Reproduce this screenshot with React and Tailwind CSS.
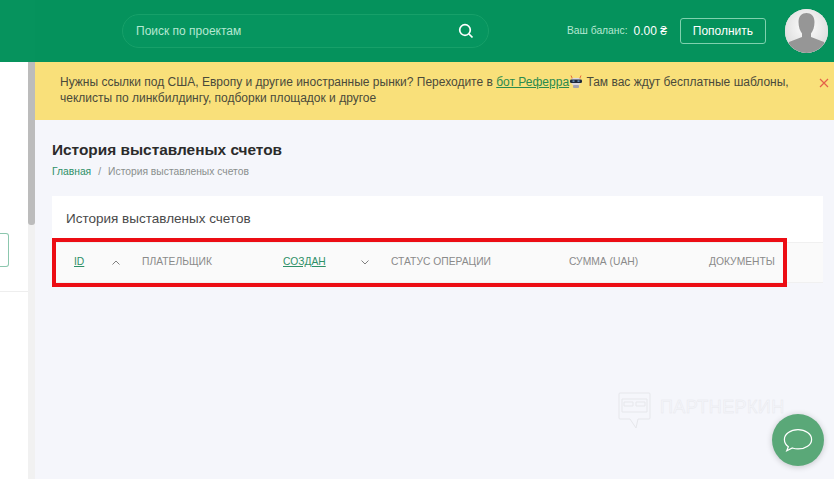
import React from "react";

function Robot() {
  return (
    <svg width="14" height="14" viewBox="0 0 14 14" className="inline-block align-[-3px]">
      <path d="M2 0.500l1.500 3.500M12 0.500l-1.500 3.500" stroke="#e0683c" strokeWidth="1" fill="none" />
      <rect x="2.500" y="3" width="9" height="7" rx="2" fill="#dcd8e0" />
      <rect x="1" y="4.500" width="12" height="3.500" rx="1.200" fill="#1f2a3c" />
      <rect x="3.500" y="5.500" width="2" height="1.200" fill="#7fb4e8" />
      <rect x="8.500" y="5.500" width="2" height="1.200" fill="#7fb4e8" />
      <rect x="4" y="10" width="6" height="3" rx="1" fill="#a2a2b0" />
    </svg>
  );
}

function Th({ className, children, link }) {
  return (
    <div className={`${className} shrink-0 text-[10.300px] leading-none ${link ? "underline text-[#2e9068]" : "text-[#8a8a8a]"}`}>
      {children}
    </div>
  );
}

function Chevron({ up, className }) {
  return (
    <svg width="8" height="5" viewBox="0 0 8 5" className={className} fill="none" stroke="#7f7f7f" strokeWidth="1">
      <path d={up ? "M0.500 4.500L4 1L7.500 4.500" : "M0.500 0.500L4 4L7.500 0.500"} />
    </svg>
  );
}

export default function App() {
  return (
    <div className="relative h-[479px] w-[834px] overflow-hidden bg-[#f5f6fb] font-['Liberation_Sans',Arial,sans-serif]">
      <header className="flex h-[62px] items-center bg-[#05925c]">
        <div className="h-full w-[35px] shrink-0 bg-[#06935d]" />
        <div className="ml-[87px] flex h-[34px] w-[367px] items-center justify-between rounded-full border border-[#17a069] bg-[#06955f] pl-[13px] pr-[14px]">
          <span className="text-[12px] text-[#b5e8d2]">Поиск по проектам</span>
          <svg width="16" height="16" viewBox="0 0 16 16" fill="none" stroke="#fff" strokeWidth="1.700">
            <circle cx="7" cy="7" r="5.300" />
            <path d="M11 11l3.500 3.500" />
          </svg>
        </div>
        <span className="ml-[78px] text-[10.300px] text-[#b5e8d2]">Ваш баланс:</span>
        <span className="ml-[6px] text-[12px] text-white">0.00 ₴</span>
        <button className="ml-[13px] h-[26px] w-[86px] rounded-[3px] border border-[#7fd1ae] text-[12px] text-white">Пополнить</button>
        <div className="ml-[19px] h-[44px] w-[43px] shrink-0 overflow-hidden rounded-full bg-[#e4e4e4]">
          <svg width="43" height="44" viewBox="0 0 43 44">
            <defs>
              <radialGradient id="g" cx="0.500" cy="0.400" r="0.600">
                <stop offset="0.300" stopColor="#f4f4f4" />
                <stop offset="1" stopColor="#dcdcdc" />
              </radialGradient>
            </defs>
            <rect width="43" height="44" fill="url(#g)" />
            <path d="M13.500 13c0-6 3.500-9 8-9s8 3 8 9c0 5-1.500 9-3.500 11.500v3.500l13 5 4 11H0l4-11 13-5v-3.500c-2-2.500-3.500-6.500-3.500-11.500z" fill="#969696" />
          </svg>
        </div>
      </header>

      <div className="flex h-[417px]">
        <aside className="flex w-[35px] shrink-0 bg-white">
          <div className="w-[28px] shrink-0">
            <div className="mt-[171px] h-[34px] w-[9px] rounded-r-[3px] border border-l-0 border-[#8cc7ae]" />
            <div className="mt-[24px] h-px bg-[#eeeeee]" />
          </div>
          <div className="w-[7px] bg-[#f1f1f1]">
            <div className="h-[163px] rounded-b-[3px] bg-[#bcbcbc]" />
          </div>
        </aside>

        <main className="min-w-0 flex-1">
          <div className="flex h-[58px] bg-[#f9e07a] pl-[25px] pt-[12px] text-[12px] leading-[16px] text-[#4a4a3a]">
            <p className="w-[758px]">
              Нужны ссылки под США, Европу и другие иностранные рынки? Переходите в{" "}
              <span className="text-[#2a8a4e] underline">бот Реферра</span>
              <Robot /> Там вас ждут бесплатные шаблоны,
              <br />
              чеклисты по линкбилдингу, подборки площадок и другое
            </p>
            <svg width="10" height="10" viewBox="0 0 10 10" className="ml-[1px] mt-[4px]" stroke="#e4604a" strokeWidth="1.200">
              <path d="M1 1l8 8M9 1l-8 8" />
            </svg>
          </div>

          <div className="pl-[17px] pr-[11px]">
            <h1 className="mt-[20px] text-[15.400px] font-bold leading-[20px] text-[#2b2b2b]">История выставленых счетов</h1>
            <div className="mt-[5px] flex text-[10.300px] leading-[14px] text-[#8a8f8d]">
              <span className="text-[#2e9068]">Главная</span>
              <span className="mx-[7px]">/</span>
              <span>История выставленых счетов</span>
            </div>

            <section className="mt-[17px] bg-white">
              <div className="flex h-[46px] items-center pl-[14px] text-[13.500px] text-[#4a4a4a]">История выставленых счетов</div>
              <div className="flex h-[41px] items-center border-y border-[#f0f0f0] bg-[#fafafa] pl-[22px]">
                <Th className="w-[38px]" link>ID</Th>
                <Chevron up className="shrink-0" />
                <Th className="ml-[22px] w-[141px]">ПЛАТЕЛЬЩИК</Th>
                <Th className="w-[78px]" link>СОЗДАН</Th>
                <Chevron className="shrink-0" />
                <Th className="ml-[22px] w-[178px]">СТАТУС ОПЕРАЦИИ</Th>
                <Th className="w-[140px]">СУММА (UAH)</Th>
                <Th className="w-[70px]">ДОКУМЕНТЫ</Th>
              </div>
            </section>
          </div>
        </main>
      </div>

      {/* red annotation frame */}
      <div className="absolute left-[52px] top-[238px] h-[49px] w-[735px] border-[4px] border-[#ec0d14]" />

      {/* watermark */}
      <div className="absolute left-[618px] top-[392px] flex items-start gap-[9px]">
        <svg width="33" height="37" viewBox="0 0 33 37" fill="none" stroke="#e6e7eb" strokeWidth="1">
          <path d="M2 1h29a1 1 0 0 1 1 1v24a1 1 0 0 1-1 1H20l-2 9-6-9H2a1 1 0 0 1-1-1V2a1 1 0 0 1 1-1z" />
          <path d="M4 7h25v13H4zM6 10h9v4H6zM18 10h9v4h-9z" />
        </svg>
        <span className="mt-[3px] text-[18px] leading-[24px] tracking-[0.400px] text-transparent [-webkit-text-stroke:0.5px_#e8e9ed]">ПАРТНЕРКИН</span>
      </div>

      {/* chat button */}
      <div className="absolute left-[772px] top-[414px] flex h-[52px] w-[52px] items-center justify-center rounded-full bg-[#5aa878] shadow-[0_1px_6px_rgba(0,0,0,0.2)]">
        <svg width="30" height="25" viewBox="0 0 32 26" fill="none" stroke="#fff" strokeWidth="1.300">
          <path d="M16 1.500c8 0 14.500 4.600 14.500 10.300S24 22 16 22c-2.200 0-4-.3-6-1l-6 3 1.700-4.400C3 17.600 1.500 15 1.500 11.800 1.500 6.100 8 1.500 16 1.500z" />
        </svg>
      </div>
    </div>
  );
}
